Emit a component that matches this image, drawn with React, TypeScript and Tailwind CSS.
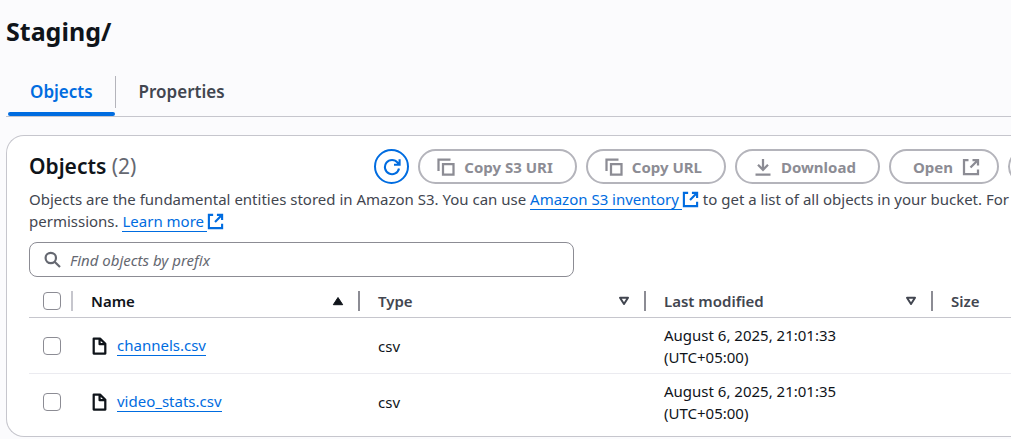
import type { ReactNode } from "react";

type IconProps = { className?: string };

function ExternalIcon({ className = "size-[18px]" }: IconProps) {
  return (
    <svg viewBox="0 0 18 18" className={`shrink-0 ${className}`} fill="none" stroke="currentColor" strokeWidth="2.25" aria-hidden="true">
      <path d="M6.5 2H2v14h14v-4.5M10.5 2H16v5.5M15.5 2.5 8.5 9.5" />
    </svg>
  );
}

function CopyIcon() {
  return (
    <svg viewBox="0 0 18 18" className="size-[18px] shrink-0" fill="none" stroke="currentColor" strokeWidth="2.25" aria-hidden="true">
      <path d="M1.5 13V1.5h12M6 6.2h10.5v10.3H6z" />
    </svg>
  );
}

function DownloadIcon() {
  return (
    <svg viewBox="0 0 18 18" className="size-[18px] shrink-0" fill="none" stroke="currentColor" strokeWidth="2.25" aria-hidden="true">
      <path d="M9 1v10.5M4 6.8l5 5 5-5M1.5 16.5h15" />
    </svg>
  );
}

function RefreshIcon() {
  return (
    <svg viewBox="0 0 18 18" className="size-[18px]" fill="none" stroke="currentColor" strokeWidth="2.1" aria-hidden="true">
      <path d="M16 10.5A7.1 7.1 0 1 1 14.6 4.7L15.8 6.4M16.6 1.2v5.6H11" />
    </svg>
  );
}

function SearchIcon() {
  return (
    <svg viewBox="0 0 18 18" className="size-[18px] shrink-0 text-[#656871]" fill="none" stroke="currentColor" strokeWidth="2.2" aria-hidden="true">
      <circle cx="6.8" cy="7" r="5.2" />
      <path d="m10.6 10.8 5.4 5.2" />
    </svg>
  );
}

function FileIcon() {
  return (
    <svg viewBox="0 0 18 18" className="size-[18px] shrink-0" fill="none" stroke="currentColor" strokeWidth="2.25" strokeLinejoin="round" aria-hidden="true">
      <path d="M2.7 1.6H9l5.3 5.2v9.7H2.7zM8.6 2v5.2h5.2" />
    </svg>
  );
}

function SortIcon({ active }: { active?: boolean }) {
  return (
    <svg viewBox="0 0 12 10" className="h-2.5 w-3 shrink-0" stroke="currentColor" strokeLinejoin="round" strokeWidth="2" aria-hidden="true">
      {active ? <path d="M6 1.5 10.7 8.7H1.3z" fill="currentColor" strokeWidth="1" /> : <path d="M2 1.8h8L6 8z" fill="none" />}
    </svg>
  );
}

function ActionButton({ children, iconEnd }: { children: ReactNode; iconEnd?: boolean }) {
  return (
    <button
      type="button"
      disabled
      className={`flex h-[35px] shrink-0 items-center gap-[9px] rounded-full border-2 border-[#b4b4bb] text-[15px] leading-[22px] font-bold text-[#8c8c94] ${iconEnd ? "pr-[17px] pl-[22px]" : "pr-[22px] pl-[17px]"}`}
    >
      {children}
    </button>
  );
}

function ExternalLink({ children }: { children: ReactNode }) {
  return (
    <a href="#" className="text-[#006ce0]">
      <span className="border-b border-current pr-[3px]">{children}</span>
      <ExternalIcon className="inline-block size-[17px] align-[-3px]" />
    </a>
  );
}

function Checkbox({ label }: { label: string }) {
  return (
    <input
      type="checkbox"
      aria-label={label}
      className="ml-3.5 block size-[18px] appearance-none rounded border border-[#8c8c94] bg-white checked:bg-[#006ce0]"
    />
  );
}

function HeaderCell({ title, sort, active }: { title: string; sort?: boolean; active?: boolean }) {
  return (
    <th className="h-[33px] border-b border-[#c6c6cd] p-0 text-left font-semibold">
      <div className={`flex h-5 items-center justify-between border-l-2 pr-3.5 pl-[18px] ${active ? "border-[#c6c6cd] text-[#0f141a]" : "border-[#8c8c94] text-[#424650]"}`}>
        <span>{title}</span>
        {sort && <SortIcon active={active} />}
      </div>
    </th>
  );
}

const files = [
  { name: "channels.csv", type: "csv", modified: "August 6, 2025, 21:01:33" },
  { name: "video_stats.csv", type: "csv", modified: "August 6, 2025, 21:01:35" },
];

export default function App() {
  return (
    <main className="min-h-screen overflow-hidden bg-[#fbfbfd] pt-[15px] pl-1.5 font-['Noto_Sans','Open_Sans',sans-serif] text-[15px] leading-[22px] text-[#0f141a]">
      <h1 className="text-[25px] leading-8 font-bold">Staging/</h1>

      <nav className="mt-6 flex border-b border-[#c6c6cd] pl-0.5 text-[17px] font-semibold">
        <a href="#objects" className="flex flex-col text-[#006ce0]">
          <span className="flex h-[41px] items-center px-[22px]">Objects</span>
          <span className="h-1 rounded-full bg-[#006ce0]" />
        </a>
        <a href="#properties" className="mt-[5px] flex h-8 items-center border-l border-[#b4b4bb] px-[23px] text-[#424650]">
          Properties
        </a>
      </nav>

      <section className="mt-[18px] overflow-hidden rounded-l-[18px] border border-r-0 border-[#c6c6cd] bg-white pt-[13px] pb-[7px] pl-[22px]">
        <header className="flex items-center justify-between">
          <h2 className="pb-0.5 text-[21px] leading-7 font-semibold">
            Objects <span className="font-normal text-[#656871]">(2)</span>
          </h2>
          <div className="-mr-8 flex gap-[9px]">
            <button type="button" aria-label="Refresh" className="flex size-[35px] items-center justify-center rounded-full border-2 border-[#006ce0] text-[#006ce0]">
              <RefreshIcon />
            </button>
            <ActionButton>
              <CopyIcon />
              Copy S3 URI
            </ActionButton>
            <ActionButton>
              <CopyIcon />
              Copy URL
            </ActionButton>
            <ActionButton>
              <DownloadIcon />
              Download
            </ActionButton>
            <ActionButton iconEnd>
              Open
              <ExternalIcon />
            </ActionButton>
            <button type="button" disabled aria-label="Delete" className="size-[35px] shrink-0 rounded-full border-2 border-[#b4b4bb]" />
          </div>
        </header>

        <p className="mt-1 whitespace-nowrap text-[#424650]">
          Objects are the fundamental entities stored in Amazon S3. You can use <ExternalLink>Amazon S3 inventory</ExternalLink> to get a list of all objects in your bucket. For
          <br />
          permissions. <ExternalLink>Learn more</ExternalLink>
        </p>

        <label className="mt-2.5 flex h-[35px] w-[545px] max-w-full items-center gap-2 rounded-lg border border-[#8c8c94] px-3.5">
          <SearchIcon />
          <input
            type="text"
            aria-label="Find objects by prefix"
            placeholder="Find objects by prefix"
            className="min-w-0 flex-1 outline-none placeholder:text-[#656871] placeholder:italic"
          />
        </label>

        <table className="mt-2 w-full table-fixed border-separate border-spacing-0">
          <colgroup>
            <col className="w-[42px]" />
            <col className="w-[287px]" />
            <col className="w-[286px]" />
            <col className="w-[287px]" />
            <col />
          </colgroup>
          <thead>
            <tr>
              <th className="border-b border-[#c6c6cd] p-0">
                <Checkbox label="Select all objects" />
              </th>
              <HeaderCell title="Name" sort active />
              <HeaderCell title="Type" sort />
              <HeaderCell title="Last modified" sort />
              <HeaderCell title="Size" />
            </tr>
          </thead>
          <tbody className="[&>tr:first-child>td]:border-b [&>tr>td]:border-[#ebebf0]">
            {files.map((file) => (
              <tr key={file.name}>
                <td className="p-0">
                  <Checkbox label={`Select ${file.name}`} />
                </td>
                <td className="p-0 pl-5">
                  <div className="flex items-center gap-2">
                    <FileIcon />
                    <a href="#" className="border-b border-current leading-5 text-[#006ce0]">
                      {file.name}
                    </a>
                  </div>
                </td>
                <td className="p-0 pl-5">{file.type}</td>
                <td className="pt-1.5 pr-4 pb-[5px] pl-5">
                  {file.modified}
                  <br />
                  (UTC+05:00)
                </td>
                <td />
              </tr>
            ))}
          </tbody>
        </table>
      </section>
    </main>
  );
}
